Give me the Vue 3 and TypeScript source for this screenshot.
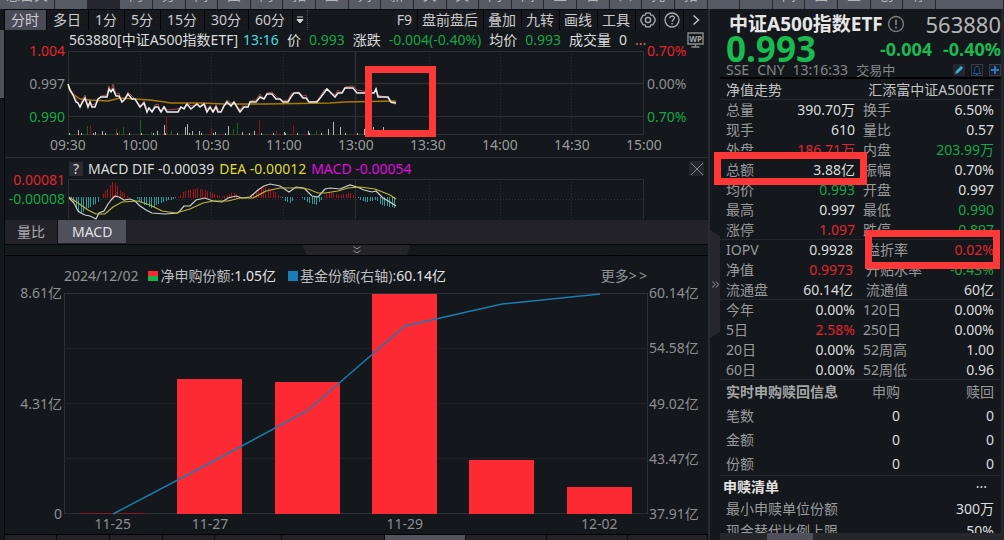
<script setup lang="ts">
type Tone = 'up' | 'down' | 'plain'
type Cell = { label: string; value: string; tone?: Tone }
type Pair = [Cell, Cell]

const topCells: string[] = ['总目关', '·', '', '闪', '分', '间', '固', '闪', '拓', '图', '列', '新', '关', '关', '闪', '间', '三', '备', '四', '托', '拓', '', '·', '间', '固', '三', '创', '荐']

const periods: string[] = ['分时', '多日', '1分', '5分', '15分', '30分', '60分']
const tools: string[] = ['F9', '盘前盘后', '叠加', '九转', '画线', '工具']
const times: string[] = ['09:30', '10:00', '10:30', '11:00', '13:00', '13:30', '14:00', '14:30', '15:00']

type Point = [number, number]
const price: Point[] = [
  [68, 84], [70, 90], [73, 95], [76, 102], [78, 103], [80, 107], [82, 103], [85, 98], [88, 107], [90, 102], [92, 107], [95, 107],
  [98, 99], [101, 97], [107, 97], [109, 89], [111, 92], [113, 89], [116, 96], [119, 96], [122, 102], [125, 99], [128, 94], [132, 99],
  [135, 99], [140, 107], [144, 103], [147, 112], [149, 108], [152, 112], [155, 107], [158, 107], [161, 112], [164, 107], [167, 112],
  [178, 112], [181, 107], [184, 109], [187, 104], [191, 109], [197, 104], [200, 107], [204, 104], [207, 112], [210, 107], [213, 112],
  [216, 107], [218, 112], [221, 112], [224, 106], [227, 102], [231, 106], [234, 102], [237, 107], [240, 112], [244, 107], [248, 107],
  [250, 102], [256, 102], [260, 97], [264, 99], [267, 94], [272, 94], [276, 99], [280, 99], [283, 102], [288, 102], [291, 97],
  [294, 93], [299, 93], [303, 98], [306, 98], [309, 102], [317, 102], [321, 97], [324, 93], [327, 89], [331, 93], [335, 97],
  [338, 93], [342, 93], [345, 88], [353, 88], [357, 93], [374, 93], [376, 89], [378, 97], [388, 97], [391, 102], [396, 103],
]
const average: Point[] = [
  [68, 86], [70, 91], [73, 94], [80, 99], [90, 100], [108, 101], [120, 98], [135, 99], [150, 100], [165, 102], [170, 103],
  [200, 103], [225, 104], [265, 104], [330, 103], [345, 102], [396, 101],
]
const toPoints = (list: Point[]): string => list.map((p) => p.join(',')).join(' ')
const pricePath = toPoints(price)
const indexPath = toPoints(price.map(([x, y], i): Point => [x, x === 113 ? 84 : x > 378 ? y + 1 : y - (i % 4)]))
const averagePath = toPoints(average)

type Bar = { x: number; h: number; c: string }
const W = '#b5b7b9'
const G = '#0c6b14'
const R = '#8e1115'
const noise: Bar[] = []
for (let i = 0; i < 132; i++) {
  noise.push({ x: 69 + Math.round(i * 2.4), h: 1 + ((i * 7) % 5 === 0 ? 1 : 0), c: [W, G, R, G, R][(i * 3) % 5] })
}
const peaks: Bar[] = ([
  [78, 5, W], [87, 9, G], [90, 10, R], [95, 3, W], [102, 4, W], [116, 6, G], [119, 4, R], [123, 8, G], [140, 15, G], [151, 3, G],
  [157, 4, W], [164, 10, W], [166, 18, R], [171, 4, G], [185, 8, W], [187, 11, W], [192, 4, W], [199, 4, W], [211, 7, R], [215, 3, W],
  [228, 9, W], [233, 6, G], [237, 12, G], [242, 3, W], [254, 4, W], [259, 15, R], [276, 4, R], [284, 3, W], [293, 10, R], [308, 4, W],
  [316, 4, G], [328, 6, W], [333, 13, W], [340, 8, W], [364, 6, W], [373, 8, W], [377, 5, G], [383, 8, W],
] as [number, number, string][]).map(([x, h, c]) => ({ x, h, c }))
const volume: Bar[] = [...noise, ...peaks]

const histKeys: Point[] = [
  [70, 0], [74, -8], [80, -17], [88, -11], [98, -5], [100, 0], [102, 3], [108, 10], [113, 18], [119, 9], [126, 3], [128, 1],
  [136, -1], [140, -6], [152, -11], [160, -6], [176, -1], [179, 2], [184, 7], [198, 10], [208, 7], [218, 2], [224, 2], [233, 6], [240, 1],
  [248, 1], [256, 8], [266, 11], [272, 8], [281, 1], [284, -4], [290, -6], [296, 1], [302, -1], [308, -6], [316, -8], [323, -1],
  [326, 4], [331, 5], [340, 3], [350, 5], [356, 1], [360, -3], [366, -5], [373, -4], [376, -3], [381, -8], [396, -11],
]
const levelAt = (x: number): number => {
  for (let i = 1; i < histKeys.length; i++) {
    const [x0, y0] = histKeys[i - 1]
    const [x1, y1] = histKeys[i]
    if (x <= x1) return y0 + ((y1 - y0) * (x - x0)) / (x1 - x0)
  }
  return 0
}
const hist: { x: number; v: number }[] = []
for (let i = 0; i < 134; i++) {
  const x = 71 + Math.round(i * 2.43)
  hist.push({ x, v: Math.round(levelAt(x)) })
}
const dif = toPoints([
  [69, 198], [74, 203], [78, 211], [81, 213], [85, 215], [90, 216], [96, 219], [99, 213], [104, 211], [108, 204], [112, 199],
  [115, 196], [119, 197], [124, 200], [130, 199], [135, 201], [140, 206], [146, 210], [152, 213], [165, 214], [178, 213], [184, 206],
  [190, 206], [196, 200], [205, 198], [213, 201], [222, 202], [228, 198], [236, 196], [242, 198], [250, 197], [258, 190], [264, 186],
  [270, 184], [280, 186], [289, 192], [296, 187], [304, 188], [312, 196], [318, 197], [325, 189], [330, 188], [340, 189], [350, 185],
  [357, 187], [364, 190], [372, 192], [376, 191], [383, 198], [390, 202], [396, 206],
])
const dea = toPoints([
  [69, 197], [78, 203], [88, 210], [96, 214], [105, 214], [113, 207], [122, 202], [138, 201], [150, 205], [162, 211], [176, 213],
  [190, 209], [203, 203], [213, 201], [228, 201], [240, 198], [253, 198], [266, 191], [280, 188], [300, 188], [308, 189], [318, 193],
  [325, 193], [338, 191], [348, 188], [360, 187], [375, 189], [390, 195], [396, 199],
])

const shareBars: { x: number; y: number }[] = [
  { x: 16, y: 220 }, { x: 113, y: 86 }, { x: 211, y: 89 }, { x: 308, y: 1 }, { x: 405, y: 167 }, { x: 503, y: 194 },
]
const shareDates: string[] = ['11-25', '11-27', '', '11-29', '', '12-02']
const rightAxis: string[] = ['60.14亿', '54.58亿', '49.02亿', '43.47亿', '37.91亿']

const quotes: { kind: string; rows: Pair[] }[] = [
  {
    kind: 'basic',
    rows: [
      [{ label: '总量', value: '390.70万' }, { label: '换手', value: '6.50%' }],
      [{ label: '现手', value: '610' }, { label: '量比', value: '0.57' }],
      [{ label: '外盘', value: '186.71万', tone: 'up' }, { label: '内盘', value: '203.99万', tone: 'down' }],
      [{ label: '总额', value: '3.88亿' }, { label: '振幅', value: '0.70%' }],
      [{ label: '均价', value: '0.993', tone: 'down' }, { label: '开盘', value: '0.997' }],
      [{ label: '最高', value: '0.997' }, { label: '最低', value: '0.990', tone: 'down' }],
      [{ label: '涨停', value: '1.097', tone: 'up' }, { label: '跌停', value: '0.897', tone: 'down' }],
    ],
  },
  {
    kind: 'fund',
    rows: [
      [{ label: 'IOPV', value: '0.9928' }, { label: '溢折率', value: '0.02%', tone: 'up' }],
      [{ label: '净值', value: '0.9973', tone: 'up' }, { label: '升贴水率', value: '-0.43%', tone: 'down' }],
      [{ label: '流通盘', value: '60.14亿' }, { label: '流通值', value: '60亿' }],
    ],
  },
  {
    kind: 'span',
    rows: [
      [{ label: '今年', value: '0.00%' }, { label: '120日', value: '0.00%' }],
      [{ label: '5日', value: '2.58%', tone: 'up' }, { label: '250日', value: '0.00%' }],
      [{ label: '20日', value: '0.00%' }, { label: '52周高', value: '1.00' }],
      [{ label: '60日', value: '0.00%' }, { label: '52周低', value: '0.96' }],
    ],
  },
]
const orders: string[] = ['笔数', '金额', '份额']
</script>

<template>
  <div class="app">
    <nav class="top">
      <div v-for="(c, i) in topCells" :key="i" :class="{ dark: i === 2 }"><span>{{ c }}</span></div>
      <div></div>
    </nav>

    <div class="body">
      <div class="rail"><i></i></div>

      <main class="main">
        <div class="toolbar">
          <button v-for="(p, i) in periods" :key="p" class="period" :class="{ on: i === 0 }">{{ p }}</button>
          <button class="drop" aria-label="更多周期">
            <svg width="8" height="8" viewBox="0 0 8 8"><path d="M1 1h6M1 3.5h6L4 7z" stroke="#d5d5d5" fill="#d5d5d5" /></svg>
          </button>
          <i class="grip"></i>
          <span class="space"></span>
          <button v-for="t in tools" :key="t" class="tool">{{ t }}</button>
          <button class="icon" aria-label="设置">
            <svg width="16" height="16" viewBox="0 0 16 16" fill="none" stroke="#aeb0b3" stroke-width="1.3" stroke-linejoin="round">
              <path d="M5.8 1.2h4.4l.7 1.9 2 .2 2.2 3.7v2l-2.2 3.7-2 .2-.7 1.9H5.8l-.7-1.9-2-.2L.9 9V7l2.2-3.7 2-.2z" />
              <circle cx="8" cy="8" r="2.6" />
            </svg>
          </button>
          <button class="icon" aria-label="帮助">
            <svg width="16" height="16" viewBox="0 0 16 16" fill="none" stroke="#aeb0b3" stroke-width="1.3">
              <circle cx="8" cy="8" r="7" />
              <path d="M5.8 6.3c0-3 4.6-3 4.6-.2 0 1.6-2.3 1.7-2.3 3.6M8.1 11v1.4" />
            </svg>
          </button>
          <button class="icon" aria-label="展开">
            <svg width="8" height="12" viewBox="0 0 8 12" fill="none" stroke="#c4c5c7" stroke-width="1.4"><path d="M1.5 1.5L6.5 6l-5 4.5" /></svg>
          </button>
        </div>

        <div class="info">
          <span>563880[中证A500指数ETF]</span><span class="cyan">13:16</span>
          <span>价</span><span class="down">0.993</span>
          <span>涨跌</span><span class="down">-0.004(-0.40%)</span>
          <span>均价</span><span class="down">0.993</span>
          <span>成交量</span><span>0</span><span class="salmon">...</span>
          <button class="wp" aria-label="WP">
            <svg width="17" height="16" viewBox="0 0 17 16" fill="none" stroke="#8b8d90" stroke-width="1.4">
              <path d="M1 1h15v11H1zM8.5 12v2.5M4.5 15h8" />
              <text x="8.5" y="9.5" text-anchor="middle" font-size="8" font-weight="700" fill="#a6a8aa" stroke="none">WP</text>
            </svg>
          </button>
        </div>

        <section class="chart">
          <div class="axis left three"><span class="up">1.004</span><span>0.997</span><span class="down">0.990</span></div>
          <div class="plot price">
            <svg viewBox="68 51 576 84" preserveAspectRatio="none">
              <g stroke="#2c2f33" fill="none">
                <path d="M68 51.5H644M68 134.5H644M68.5 51V135M643.5 51V135" />
                <path d="M68 83.5H644M355.5 51V135" stroke-width="1.5" />
                <path d="M68 116.5H644" />
                <path d="M140.5 51V135M211.5 51V135M283.5 51V135M429.5 51V135M500.5 51V135M571.5 51V135" stroke-dasharray="1 2" />
              </g>
              <rect v-for="(b, i) in volume" :key="i" :x="b.x" :y="135 - b.h" width="1" :height="b.h" :fill="b.c" />
              <polyline :points="averagePath" fill="none" stroke="#a87b08" stroke-width="1.3" />
              <polyline :points="indexPath" fill="none" stroke="#9c4c50" />
              <polyline :points="pricePath" fill="none" stroke="#f0f0f0" stroke-width="1.5" />
            </svg>
            <i class="mark mark-chart"></i>
          </div>
          <div class="axis right three"><span class="up">0.70%</span><span>0.00%</span><span class="down">0.70%</span></div>
        </section>
        <div class="times"><span v-for="t in times" :key="t">{{ t }}</span></div>

        <div class="macd-head">
          <button class="q">?</button>
          <span>MACD DIF -0.00039</span><span class="yellow">DEA -0.00012</span><span class="magenta">MACD -0.00054</span>
          <button class="x" aria-label="关闭">
            <svg width="12" height="12" viewBox="0 0 12 12" stroke="#85868a" fill="none"><path d="M0 0l12 12M12 0L0 12" /></svg>
          </button>
        </div>
        <section class="chart">
          <div class="axis left two"><span class="up">0.00081</span><span class="down">-0.00008</span></div>
          <div class="plot macd">
            <svg viewBox="68 179 576 40" preserveAspectRatio="none">
              <g stroke="#2c2f33" fill="none">
                <path d="M68 179.5H644M68.5 179V219M643.5 179V219M355.5 179V219" />
                <path d="M68 199.5H644M140.5 179V219M211.5 179V219M283.5 179V219M429.5 179V219M500.5 179V219M571.5 179V219" stroke-dasharray="1 2" />
              </g>
              <rect v-for="b in hist" :key="b.x" :x="b.x" :y="b.v > 0 ? 198 - b.v : 197" width="1" :height="Math.abs(b.v)" :fill="b.v > 0 ? '#a31519' : '#2f9a9c'" />
              <polyline :points="dif" fill="none" stroke="#cfcfcf" stroke-width="1.2" />
              <polyline :points="dea" fill="none" stroke="#bdb83a" stroke-width="1.2" />
            </svg>
          </div>
        </section>

        <div class="tabs"><button>量比</button><button class="on">MACD</button></div>
        <div class="fold">
          <button aria-label="收起">
            <svg width="8" height="8" viewBox="0 0 8 8" fill="none" stroke="#97989c"><path d="M.5.5L4 3 7.5.5M.5 4.5L4 7l3.5-2.5" /></svg>
          </button>
        </div>

        <section class="shares">
          <div class="legend">
            <span class="dim">2024/12/02</span>
            <i class="sw two-tone"></i><span>净申购份额:<b>1.05亿</b></span>
            <i class="sw blue"></i><span>基金份额(右轴):<b>60.14亿</b></span>
            <a href="#more">更多&gt;&thinsp;&gt;</a>
          </div>
          <div class="share-chart">
            <div class="axis left"><span>8.61亿</span><span>4.31亿</span><span>0</span></div>
            <div class="share-plot">
              <svg viewBox="0 0 584 221" preserveAspectRatio="none">
                <path d="M0 .5H584M.5 0V221M583.5 0V221M0 220.5H584" stroke="#2c2f33" fill="none" />
                <path d="M0 55.5H584M0 110.5H584M0 165.5H584" stroke="#1d2024" fill="none" />
                <rect v-for="b in shareBars" :key="b.x" :x="b.x" :y="b.y" width="65" :height="221 - b.y" :fill="b.y === 220 ? '#7d191f' : '#fd2a34'" />
                <polyline points="49,221 146,170 243,118 341,33 438,11 536,1" fill="none" stroke="#1a7cb0" stroke-width="1.5" />
              </svg>
            </div>
            <div class="axis right"><span v-for="r in rightAxis" :key="r">{{ r }}</span></div>
          </div>
          <div class="dates"><span v-for="(d, i) in shareDates" :key="i">{{ d }}</span></div>
        </section>
        <div class="foot"><i v-for="n in 10" :key="n" :class="{ on: n === 7 }"></i></div>
      </main>

      <aside class="side">
        <button class="handle" aria-label="折叠">
          <svg width="7" height="7" viewBox="0 0 7 7" fill="none" stroke="#9a9ba0"><path d="M.5.5L3 3.5.5 6.5M4 .5l2.500 3L4 6.5" /></svg>
        </button>
        <div class="panel">
          <header class="head">
            <div class="name">
              <h1>中证A500指数ETF</h1>
              <svg width="18" height="18" viewBox="0 0 18 18" fill="none" stroke="#77797c" stroke-width="1.4"><circle cx="9" cy="9" r="7.5" /><path d="M9 4.5V10M9 11.5v2" stroke-width="1.8" /></svg>
              <span class="code">563880</span>
            </div>
            <div class="last"><strong>0.993</strong><b>-0.004</b><b>-0.40%</b></div>
            <div class="status">
              <span>SSE</span><span>CNY</span><span>13:16:33</span><span class="state">交易中</span>
              <button aria-label="编辑"><svg width="12" height="12" viewBox="0 0 12 12"><rect width="12" height="12" fill="#25272e" /><path d="M2 10l1-3 5-5 2 2-5 5z" fill="#35b5d6" /></svg></button>
              <button aria-label="提醒"><svg width="12" height="12" viewBox="0 0 12 12" fill="none"><rect x=".5" y=".5" width="11" height="11" stroke="#3a3c43" /><path d="M2 9.5h8L8.5 7.5V5c0-3.5-5-3.5-5 0v2.5zM5 10.5h2M6 1.5v1" stroke="#23508e" /></svg></button>
              <button aria-label="添加"><svg width="12" height="12" viewBox="0 0 12 12"><rect x=".5" y=".5" width="11" height="11" fill="#1c2029" stroke="#3a3c43" /><path d="M6 2v8M2 6h8" stroke="#2f78d0" stroke-width="2" /></svg></button>
            </div>
          </header>

          <div class="nav-row"><span>净值走势</span><span>汇添富中证A500ETF</span></div>

          <table v-for="g in quotes" :key="g.kind" class="quote" :class="g.kind">
            <tbody>
              <tr v-for="row in g.rows" :key="row[0].label">
                <template v-for="c in row" :key="c.label">
                  <th scope="row">{{ c.label }}</th>
                  <td :class="c.tone">{{ c.value }}</td>
                </template>
              </tr>
            </tbody>
          </table>

          <table class="orders">
            <thead>
              <tr><th scope="col"><b>实时申购赎回信息</b></th><th scope="col">申购</th><th scope="col">赎回</th></tr>
            </thead>
            <tbody>
              <tr v-for="o in orders" :key="o"><th scope="row">{{ o }}</th><td>0</td><td>0</td></tr>
            </tbody>
          </table>

          <div class="list-head"><h2>申赎清单</h2><button aria-label="更多">···</button></div>
          <table class="list">
            <tbody>
              <tr><th scope="row">最小申赎单位份额</th><td>300万</td></tr>
              <tr><th scope="row">现金替代比例上限</th><td>50%</td></tr>
            </tbody>
          </table>
        </div>
        <div class="side-foot"><i></i></div>
        <i class="mark mark-amount"></i>
        <i class="mark mark-premium"></i>
      </aside>
    </div>
  </div>
</template>

<style>
body {
  background: #14171b;
}
</style>

<style scoped>
.app {
  height: 100vh;
  display: flex;
  flex-direction: column;
  overflow: hidden;
  background: #14171b;
  color: #dcddde;
  font: 14px/20px "Noto Sans", "Noto Sans CJK SC", sans-serif;
  white-space: nowrap;
}
.app * {
  box-sizing: border-box;
}
button {
  font: inherit;
  color: inherit;
  background: none;
  border: 0;
  padding: 0;
  margin: 0;
}
svg {
  display: block;
}
.up,
.axis .up { color: #e2252c; }
.down,
.axis .down { color: #14a844; }
.cyan { color: #3fdfe3; }
.yellow { color: #dfdb38; }
.magenta { color: #e00be0; }
.salmon { color: #dc6a62; }

.top {
  flex: none;
  height: 9px;
  display: grid;
  grid-template-columns: 55px repeat(27, 1fr) 68px;
  background: #555a64;
  overflow: hidden;
}
.top div {
  height: 9px;
  display: flex;
  justify-content: center;
  align-items: flex-end;
  padding-bottom: 4px;
  border-right: 1px solid #25272c;
  color: #b4b6ba;
}
.top .dark { background: #25262d; }

.body {
  flex: 1;
  min-height: 0;
  display: grid;
  grid-template-columns: 4px 1fr 296px;
}
.rail { padding-top: 21px; }
.rail i {
  display: block;
  height: 69px;
  background: #50515b;
  border-bottom: 1px solid #000;
}
.main {
  display: flex;
  flex-direction: column;
  min-width: 0;
  min-height: 0;
  border-left: 1px solid #060708;
}
.toolbar {
  flex: none;
  height: 21px;
  display: flex;
  border-top: 1px solid #08090b;
}
.toolbar button {
  display: flex;
  align-items: center;
  justify-content: center;
  border-right: 1px solid #060708;
  background: #17191e;
  color: #cbccce;
}
.period { padding: 0 7px 0 6px; }
.tool { padding: 0 5px 0 4px; }
.toolbar .on { background: #4b4b57; }
.toolbar .drop {
  width: 14px;
  border: 0;
}
.grip {
  width: 1px;
  border-left: 1px dotted #44464a;
}
.space { flex: 1; }
.toolbar .icon { width: 24px; }
.toolbar .icon:last-child { border: 0; }

.info {
  flex: none;
  display: flex;
  align-items: center;
  height: 21px;
  padding: 0 4px 2px 64px;
  gap: 8px;
}
.info .cyan { margin-left: -3px; }
.wp { margin-left: auto; }

.chart {
  flex: none;
  display: grid;
  grid-template-columns: 63px 1fr 64px;
}
.plot {
  position: relative;
  min-width: 0;
}
.plot svg,
.share-plot svg {
  width: 100%;
  height: 100%;
  overflow: visible;
}
.plot.price { height: 84px; }
.plot.macd { height: 40px; }
.axis {
  display: flex;
  flex-direction: column;
  justify-content: space-between;
  line-height: 16px;
  color: #8d8f92;
  margin: -8px 0;
}
.axis.left {
  text-align: right;
  padding-right: 3px;
}
.axis.right { padding-left: 3px; }
.axis.three {
  height: 82px;
  margin-bottom: 0;
}
.axis.two {
  height: 35px;
  margin: -7px 0 0;
}

.times {
  flex: none;
  display: flex;
  justify-content: space-between;
  margin: 0 46px 0 45px;
  height: 22px;
  color: #9a9b9d;
}
.times span {
  width: 36px;
  text-align: center;
}
.macd-head {
  flex: none;
  display: flex;
  align-items: center;
  gap: 5px;
  height: 22px;
  padding: 0 4px 0 64px;
  border-top: 1px solid #2c2e33;
}
.q {
  width: 14px;
  height: 14px;
  line-height: 14px;
  background: #2b2c33;
}
.macd-head .x {
  margin-left: auto;
  width: 15px;
  height: 15px;
  display: grid;
  place-items: center;
  background: #24262b;
}
.tabs {
  flex: none;
  display: flex;
  height: 26px;
  padding-bottom: 1px;
  border-bottom: 1px solid #050607;
  border-top: 1px solid #15171b;
  background: #222228;
  color: #aaabad;
}
.tabs button {
  padding: 0 12px;
  border-right: 1px solid #0b0c0e;
}
.tabs .on {
  padding: 0 14px;
  background: #50505b;
  color: #e2e2e4;
  border: 0;
}
.fold {
  flex: none;
  height: 11px;
  display: flex;
  justify-content: center;
  border-bottom: 1px solid #000;
}
.fold button {
  width: 108px;
  display: grid;
  place-items: center;
  background: #24242a;
  clip-path: polygon(0 0, 100% 0, 104px 100%, 4px 100%);
}

.shares {
  flex: 1;
  min-height: 0;
  display: flex;
  flex-direction: column;
}
.legend {
  display: flex;
  align-items: center;
  padding: 10px 61px 0 59px;
  margin-bottom: 7px;
  color: #bcbec0;
}
.legend b {
  font-weight: 400;
  color: #e4e4e5;
}
.legend .dim { color: #929497; }
.legend a {
  margin-left: auto;
  color: #929497;
  text-decoration: none;
}
.sw {
  width: 10px;
  height: 10px;
  margin: 0 2px 0 10px;
}
.two-tone { background: linear-gradient(#fd2a34 50%, #17b24c 50%); }
.blue {
  margin-left: 12px;
  background: #1a7cb8;
}
.share-chart {
  flex: 1;
  min-height: 0;
  display: grid;
  grid-template-columns: 59px 1fr 60px;
}
.share-chart .left { padding-right: 2px; }
.share-chart .right { padding-left: 1px; }
.share-plot {
  min-height: 0;
  min-width: 0;
}
.dates {
  display: grid;
  grid-template-columns: repeat(6, 1fr);
  margin: 0 60px 0 59px;
  text-align: center;
  color: #8d8f92;
}
.foot {
  flex: none;
  display: grid;
  grid-template-columns: 52fr 53fr 53fr 52fr 67fr 103fr 81fr 81fr 81fr 80fr;
  height: 6px;
  border-top: 1px solid #000;
}
.foot i {
  background: #222228;
  border-right: 1px solid #08090b;
}
.foot .on { background: #53535e; }

.side {
  position: relative;
  display: flex;
  flex-direction: column;
  min-height: 0;
  border-left: 2px solid #2a2b30;
  border-right: 3px solid #25262b;
}
.handle {
  position: absolute;
  left: 0;
  top: 221px;
  width: 10px;
  height: 108px;
  display: grid;
  place-items: center;
  background: #25252b;
  clip-path: polygon(0 0, 100% 6px, 100% 102px, 0 100%);
}
.panel {
  flex: 1;
  min-height: 0;
  overflow: hidden;
  margin-left: 10px;
}
.head {
  padding: 3px 0 0 6px;
  height: 70px;
  border-bottom: 2px solid #000;
}
.name {
  display: flex;
  align-items: center;
  height: 24px;
  padding-left: 3px;
}
.name svg { margin-left: 4px; }
h1 {
  margin: 0;
  font-size: 19px;
  line-height: 24px;
  font-weight: 700;
  color: #e6e6e7;
}
.code {
  margin-left: auto;
  font-size: 22px;
  line-height: 24px;
  color: #b4b6b8;
}
.last {
  display: flex;
  align-items: center;
  gap: 11px;
  height: 26px;
  color: #19ba50;
  font-size: 18px;
}
.last strong {
  font-size: 35px;
  line-height: 26px;
  margin-right: auto;
}
.status {
  display: flex;
  align-items: center;
  height: 16px;
  line-height: 16px;
  gap: 8px;
  color: #85878a;
}
.status button { margin-left: -2px; }
.status .state {
  margin-right: auto;
  font-size: 13px;
}
.nav-row {
  display: flex;
  justify-content: space-between;
  padding: 1px 7px 0 6px;
  height: 21px;
  color: #c4c5c7;
  border-bottom: 1px solid #24272b;
}
table {
  width: 100%;
  table-layout: fixed;
  border-collapse: separate;
  border-spacing: 0;
}
th {
  font-weight: 400;
  text-align: left;
  color: #999b9d;
  padding: 0;
}
td {
  text-align: right;
  padding: 0;
}
.quote th:nth-child(1) {
  width: 60px;
  padding-left: 6px;
}
.quote td:nth-child(2) { width: 75px; }
.quote th:nth-child(3) {
  width: 72px;
  padding-left: 8px;
}
.quote td:nth-child(4) { padding-right: 7px; }
.fund td:nth-child(2) { padding-right: 2px; }
.fund th:nth-child(3) { padding-left: 11px; }
.quote,
.orders {
  box-shadow: inset 0 -1px #24272b;
}
.orders th,
.orders td {
  height: 24px;
  text-align: right;
}
.orders th:first-child {
  width: 130px;
  padding-left: 6px;
  text-align: left;
}
.orders th:nth-child(2),
.orders td:nth-child(2) { width: 50px; }
.orders th:last-child,
.orders td:last-child { padding-right: 7px; }
.orders b { color: #a4a6a8; }
.list-head {
  display: flex;
  justify-content: space-between;
  align-items: center;
  height: 22px;
  padding: 0 14px 0 3px;
}
h2 {
  margin: 0;
  font-size: 14px;
  line-height: 20px;
  color: #e2e2e3;
}
.list th,
.list td { height: 22px; }
.list th { padding-left: 6px; }
.list td { padding-right: 7px; }
.side-foot {
  flex: none;
  height: 7px;
  margin-left: 10px;
  padding-left: 47px;
  background: #26262d;
}
.side-foot i {
  display: block;
  width: 46px;
  height: 7px;
  background: #50505b;
}

.mark {
  position: absolute;
  border: 7px solid #fd3836;
  pointer-events: none;
}
.mark-chart {
  left: 297px;
  top: 15px;
  width: 71px;
  height: 71px;
}
.mark-amount {
  right: 134px;
  top: 143px;
  width: 153px;
  height: 33px;
}
.mark-premium {
  right: 1px;
  top: 221px;
  width: 135px;
  height: 39px;
}
</style>
